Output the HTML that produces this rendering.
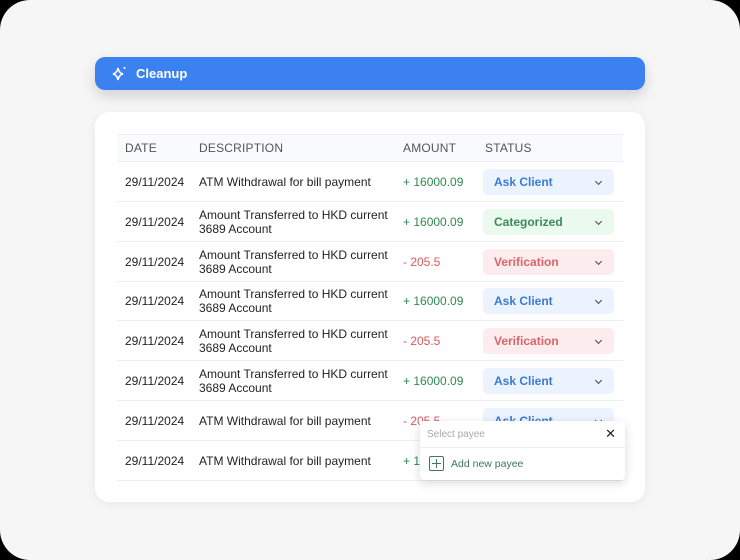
<!DOCTYPE html>
<html><head><style>
*{box-sizing:border-box;margin:0;padding:0}
body{width:740px;height:560px;background:#000;font-family:"Liberation Sans",sans-serif;position:relative;overflow:hidden}
.page{position:absolute;left:0;top:0;width:740px;height:560px;background:#f6f6f7;border-radius:30px}
.bar{position:absolute;left:95px;top:57px;width:550px;height:33px;background:#3b82f0;border-radius:10px;box-shadow:0 6px 14px rgba(0,0,0,.15);color:#fff;font-weight:bold;font-size:13px;display:flex;align-items:center;padding-left:16px}
.bar svg{margin-right:8px}
.card{position:absolute;left:95px;top:112px;width:550px;height:390px;background:#fff;border-radius:14px;box-shadow:0 2px 10px rgba(0,0,0,.06)}
.hdr{position:absolute;left:117px;top:134px;width:506px;height:28px;background:#f9fafb;border-top:1px solid #eceef1;border-bottom:1px solid #eceef1;font-size:12px;color:#555;letter-spacing:.2px}
.hdr span,.row span{position:absolute;top:50%;transform:translateY(-50%)}
.row{position:absolute;left:117px;width:506px;height:40px;border-bottom:1px solid #eceef1;font-size:12px;color:#222}
.d{left:8px}.s{left:82px;line-height:14px}.a{left:286px}
.pos{color:#2f8a4e}.neg{color:#d65a5a}
.pill{position:absolute;left:366px;top:7px;width:131px;height:26px;border-radius:5px;font-weight:bold;font-size:12px;padding-left:11px;line-height:26px}
.pill:after{content:"";position:absolute;right:13px;top:10px;width:4px;height:4px;border-right:1.3px solid #444;border-bottom:1.3px solid #444;transform:rotate(45deg)}
.ask{background:#ebf3fe;color:#3b7ad9}.cat{background:#eafaef;color:#3d8a5a}.ver{background:#fdeced;color:#d9646a}
.pop{position:absolute;left:420px;top:421px;width:205px;height:59px;background:#fff;border-radius:4px;box-shadow:0 3px 10px rgba(0,0,0,.15);font-size:10px}
.pop .t{height:27px;border-bottom:1px solid #eee;color:#aaa;padding:8px 0 0 7px}
.pop .x{position:absolute;right:9px;top:5px;color:#222;font-size:13px}
.pop .add{color:#3d7a55;padding:8px 0 0 9px;display:flex;align-items:center;font-size:10.5px}
.pl{width:15px;height:15px;border:1.3px solid #3d7a55;border-radius:2px;position:relative;margin-right:7px}
.pl:before{content:"";position:absolute;left:6px;top:2px;width:1.3px;height:9px;background:#3d7a55}
.pl:after{content:"";position:absolute;left:2px;top:6px;width:9px;height:1.3px;background:#3d7a55}
</style></head><body><div class="page">
<div class="bar"><svg width="17" height="17" viewBox="0 0 17 17" fill="none" stroke="#fff" stroke-width="1.6"><path d="M7 3 Q7.8 8 12 9 Q7.8 10 7 15 Q6.2 10 2 9 Q6.2 8 7 3Z"/><circle cx="13.5" cy="3" r="1" fill="#fff" stroke="none"/></svg>Cleanup</div>
<div class="card"></div>
<div class="hdr"><span class="d">DATE</span><span class="s">DESCRIPTION</span><span class="a">AMOUNT</span><span style="left:368px">STATUS</span></div>
<div class="row" style="top:162px"><span class="d">29/11/2024</span><span class="s">ATM Withdrawal for bill payment</span><span class="a pos">+ 16000.09</span><div class="pill ask">Ask Client</div></div>
<div class="row" style="top:202px"><span class="d">29/11/2024</span><span class="s">Amount Transferred to HKD current<br>3689 Account</span><span class="a pos">+ 16000.09</span><div class="pill cat">Categorized</div></div>
<div class="row" style="top:242px"><span class="d">29/11/2024</span><span class="s">Amount Transferred to HKD current<br>3689 Account</span><span class="a neg">- 205.5</span><div class="pill ver">Verification</div></div>
<div class="row" style="top:281px"><span class="d">29/11/2024</span><span class="s">Amount Transferred to HKD current<br>3689 Account</span><span class="a pos">+ 16000.09</span><div class="pill ask">Ask Client</div></div>
<div class="row" style="top:321px"><span class="d">29/11/2024</span><span class="s">Amount Transferred to HKD current<br>3689 Account</span><span class="a neg">- 205.5</span><div class="pill ver">Verification</div></div>
<div class="row" style="top:361px"><span class="d">29/11/2024</span><span class="s">Amount Transferred to HKD current<br>3689 Account</span><span class="a pos">+ 16000.09</span><div class="pill ask">Ask Client</div></div>
<div class="row" style="top:401px"><span class="d">29/11/2024</span><span class="s">ATM Withdrawal for bill payment</span><span class="a neg">- 205.5</span><div class="pill ask">Ask Client</div></div>
<div class="row" style="top:441px"><span class="d">29/11/2024</span><span class="s">ATM Withdrawal for bill payment</span><span class="a pos">+ 16000.09</span></div>
<div class="pop"><div class="t">Select payee</div><div class="x">✕</div><div class="add"><div class="pl"></div>Add new payee</div></div>
</div></body></html>
